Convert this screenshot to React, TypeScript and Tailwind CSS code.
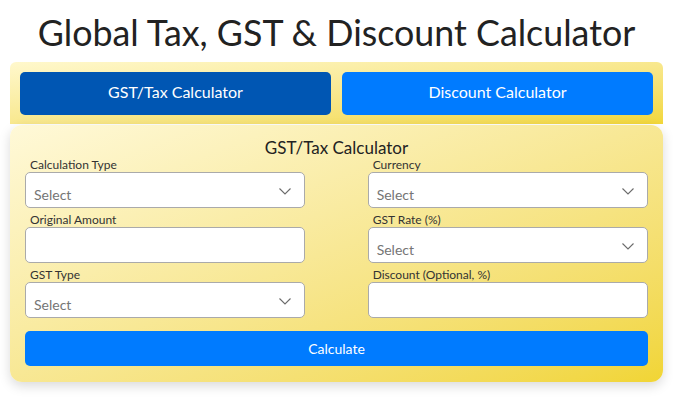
import React from "react";

function Chevron() {
  return (
    <svg width="12" height="7" viewBox="0 0 12 7" className="absolute right-[13px] top-[15px]">
      <path d="M0.5 0.5 L6 6 L11.5 0.5" fill="none" stroke="#6b6b6b" strokeWidth="1.1" />
    </svg>
  );
}

function SelectField({ label }: { label: string }) {
  return (
    <div className="flex flex-col">
      <label className="pl-[5px] text-[12px] leading-[14px] text-[#333]">{label}</label>
      <div className="relative h-[36px] rounded-[5px] border border-[#aaaaaa] bg-white">
        <span className="absolute left-[8px] top-[13px] text-[14px] leading-[18px] text-[#757575]">Select</span>
        <Chevron />
      </div>
    </div>
  );
}

function InputField({ label }: { label: string }) {
  return (
    <div className="flex flex-col">
      <label className="pl-[5px] text-[12px] leading-[14px] text-[#333]">{label}</label>
      <div className="h-[36px] rounded-[5px] border border-[#aaaaaa] bg-white" />
    </div>
  );
}

export default function App() {
  return (
    <div className="w-[673px] h-[403px] bg-white font-['Lato','Noto_Sans',sans-serif]">
      <h1 className="pt-[11px] text-center text-[35.8px] leading-[44px] text-[#222]">
        Global Tax, GST &amp; Discount Calculator
      </h1>
      <div className="mx-[10px] mt-[7px] flex gap-[11px] rounded-t-[6px] bg-linear-to-br from-[#fff8cc] to-[#f2d738] px-[10px] pt-[10px] pb-[9px]">
        <button className="h-[43px] flex-1 rounded-[5px] bg-[#0056b3] pb-[3px] text-[16px] text-white">
          GST/Tax Calculator
        </button>
        <button className="h-[43px] flex-1 rounded-[5px] bg-[#007bff] pb-[3px] text-[16px] text-white">
          Discount Calculator
        </button>
      </div>
      <div className="mx-[10px] mt-[1px] rounded-[12px] bg-linear-to-br from-[#fff9d8] to-[#f1d533] px-[15px] pt-[13px] pb-[16px] shadow-[0_4px_12px_rgba(0,0,0,0.15)]">
        <div className="text-center text-[17px] leading-[20px] text-[#222]">GST/Tax Calculator</div>
        <div className="flex justify-between">
          <div className="flex w-[45%] flex-col gap-[5px]">
            <SelectField label="Calculation Type" />
            <InputField label="Original Amount" />
            <SelectField label="GST Type" />
          </div>
          <div className="flex w-[45%] flex-col gap-[5px]">
            <SelectField label="Currency" />
            <SelectField label="GST Rate (%)" />
            <InputField label="Discount (Optional, %)" />
          </div>
        </div>
        <button className="mt-[13px] h-[35px] w-full rounded-[5px] bg-[#007bff] text-[14px] text-white">
          Calculate
        </button>
      </div>
    </div>
  );
}
